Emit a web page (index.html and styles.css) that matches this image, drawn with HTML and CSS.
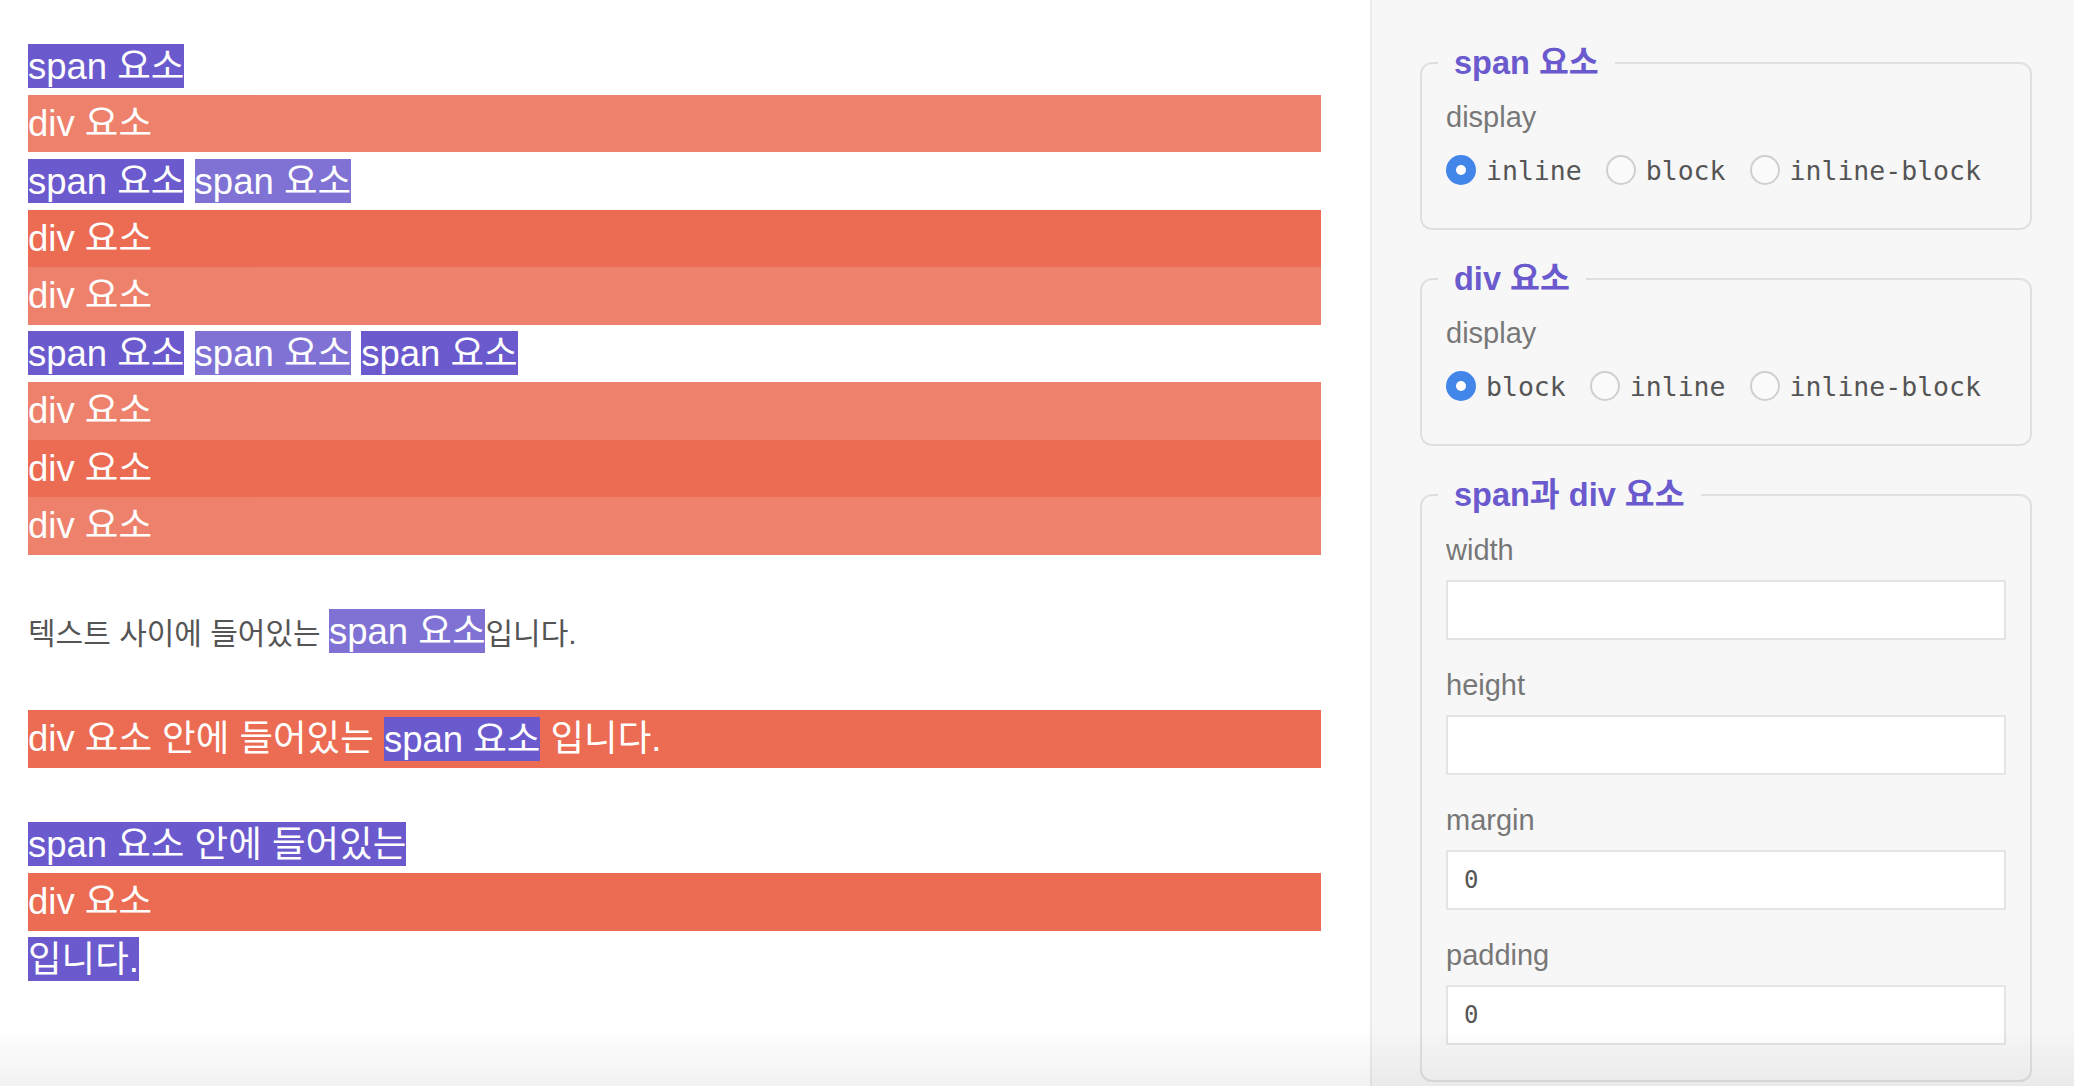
FILE: index.html
```html
<!DOCTYPE html>
<html lang="ko">
<head>
<meta charset="utf-8">
<title>span과 div</title>
<link rel="stylesheet" href="styles.css">
</head>
<body>
<div class="layout">
  <main class="demo">
    <section class="group">
      <span class="s">span 요소</span>
      <div class="d">div 요소</div>
      <span class="s">span 요소</span>
      <span class="s">span 요소</span>
      <div class="d">div 요소</div>
      <div class="d">div 요소</div>
      <span class="s">span 요소</span>
      <span class="s">span 요소</span>
      <span class="s">span 요소</span>
      <div class="d">div 요소</div>
      <div class="d">div 요소</div>
      <div class="d">div 요소</div>
    </section>
    <p class="text">텍스트 사이에 들어있는 <span class="s light">span 요소</span>입니다.</p>
    <div class="d">div 요소 안에 들어있는 <span class="s">span 요소</span> 입니다.</div>
    <section class="nest"><span class="s">span 요소 안에 들어있는<div class="d">div 요소</div>입니다.</span></section>
  </main>
  <aside class="panel">
    <fieldset class="box">
      <legend class="box-title">span 요소</legend>
      <div class="field-label">display</div>
      <div class="radios">
        <label class="radio"><input type="radio" name="sd" checked><span>inline</span></label>
        <label class="radio"><input type="radio" name="sd"><span>block</span></label>
        <label class="radio"><input type="radio" name="sd"><span>inline-block</span></label>
      </div>
    </fieldset>
    <fieldset class="box">
      <legend class="box-title">div 요소</legend>
      <div class="field-label">display</div>
      <div class="radios">
        <label class="radio"><input type="radio" name="dd" checked><span>block</span></label>
        <label class="radio"><input type="radio" name="dd"><span>inline</span></label>
        <label class="radio"><input type="radio" name="dd"><span>inline-block</span></label>
      </div>
    </fieldset>
    <fieldset class="box">
      <legend class="box-title">span과 div 요소</legend>
      <div class="fields">
        <label class="field"><span class="field-label">width</span><input class="input" type="text" value=""></label>
        <label class="field"><span class="field-label">height</span><input class="input" type="text" value=""></label>
        <label class="field"><span class="field-label">margin</span><input class="input" type="text" value="0"></label>
        <label class="field"><span class="field-label">padding</span><input class="input" type="text" value="0"></label>
      </div>
    </fieldset>
  </aside>
</div>
<div class="fade"></div>
</body>
</html>
```

FILE: styles.css
```css
* { box-sizing: border-box; }

html, body {
  margin: 0;
  height: 100%;
  background: #fff;
}

body {
  font-family: "Liberation Sans", "Noto Sans CJK KR", sans-serif;
  overflow: hidden;
}

.layout {
  display: flex;
  height: 100vh;
}

.demo {
  flex: 1;
  padding: 37px 49px 0 28px;
  display: flex;
  flex-direction: column;
  gap: 48px;
  line-height: 57.5px;
  font-size: 36.5px;
  color: #fff;
}

.group, .nest { display: block; }

.s {
  background: #6a5acd;
  color: #fff;
  padding: 1.5px 0;
  font-size: 36.5px;
}

.d {
  background: #ec6c53;
  color: #fff;
  font-size: 36.5px;
}

.group > :nth-child(even),
.s.light {
  opacity: 0.85;
}

.text {
  margin: 0;
  font-size: 30px;
  color: #555;
}

.panel {
  width: 704px;
  flex: none;
  background: #f7f7f7;
  border-left: 2px solid #ebebeb;
  padding: 41px 42px 0 48px;
  display: flex;
  flex-direction: column;
  gap: 27px;
}

.box {
  margin: 0;
  min-width: 0;
  border: 2px solid #e0e0e0;
  border-radius: 12px;
  padding: 14px 24px 38px;
}

.box-title {
  font-weight: bold;
  font-size: 32.5px;
  line-height: 44px;
  color: #6a5acd;
  padding: 0 16px;
  margin-left: -8px;
}

.box:last-child {
  padding-top: 15px;
  padding-bottom: 35px;
}

.field-label {
  display: block;
  font-size: 29px;
  line-height: 36px;
  color: #777;
}

.radios {
  display: flex;
  align-items: center;
  gap: 24px;
  height: 40px;
  margin-top: 15px;
}

.radio {
  display: inline-flex;
  align-items: center;
  gap: 10px;
  font-family: "DejaVu Sans Mono", monospace;
  font-size: 26.5px;
  color: #555;
}

.radio input {
  appearance: none;
  -webkit-appearance: none;
  margin: 0;
  width: 30px;
  height: 30px;
  border-radius: 50%;
  border: 2px solid #cfcfcf;
  background: #fafafa;
  display: grid;
  place-items: center;
}

.radio input:checked {
  border: none;
  background: #4286ea;
}

.radio input:checked::after {
  content: "";
  width: 10px;
  height: 10px;
  border-radius: 50%;
  background: #fff;
}

.fields {
  display: flex;
  flex-direction: column;
  gap: 27px;
}

.field {
  display: flex;
  flex-direction: column;
  gap: 12px;
}

.input {
  display: block;
  width: 100%;
  height: 60px;
  margin: 0;
  border: 2px solid #e4e4e4;
  border-radius: 0;
  background: #fff;
  padding: 0 16px;
  font-family: "DejaVu Sans Mono", monospace;
  font-size: 24px;
  color: #555;
  outline: none;
}

.fade {
  position: fixed;
  left: 0;
  right: 0;
  bottom: 0;
  height: 60px;
  background: linear-gradient(to bottom, rgba(0,0,0,0), rgba(0,0,0,0.05));
  pointer-events: none;
}
```
